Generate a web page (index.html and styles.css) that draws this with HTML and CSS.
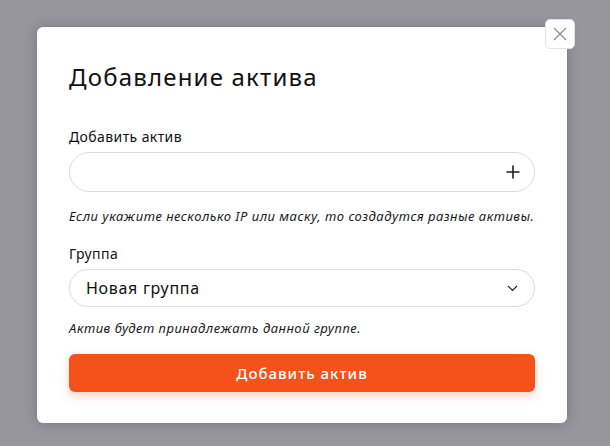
FILE: index.html
```html
<!DOCTYPE html>
<html lang="ru">
<head>
    <meta charset="UTF-8">
    <meta name="viewport" content="width=device-width, initial-scale=1.0">
    <title>Добавление актива</title>
    <link rel="stylesheet" href="styles.css">
</head>
<body>

<div class="modal">
    <button class="close-button" aria-label="Закрыть">
        <svg width="14" height="14" viewBox="0 0 14 14">
            <path d="M1 1L13 13M13 1L1 13" stroke="#8d8d8d" stroke-width="1.3" fill="none"/>
        </svg>
    </button>

    <h1 class="modal-title">Добавление актива</h1>

    <div class="field">
        <label class="field-label" for="assetInput">Добавить актив</label>
        <div class="input-wrap">
            <input type="text" id="assetInput" class="text-input">
            <span class="input-icon">
                <svg width="14" height="14" viewBox="0 0 14 14">
                    <path d="M7 0.5V13.5M0.5 7H13.5" stroke="#1c1c1c" stroke-width="1.6" fill="none"/>
                </svg>
            </span>
        </div>
        <p class="hint">Если укажите несколько IP или маску, то создадутся разные активы.</p>
    </div>

    <div class="field">
        <label class="field-label">Группа</label>
        <div class="select">
            <span class="select-value">Новая группа</span>
            <svg width="11" height="7" viewBox="0 0 11 7">
                <path d="M1 1L5.5 5.5L10 1" stroke="#222" stroke-width="1.2" fill="none"/>
            </svg>
        </div>
        <p class="hint">Актив будет принадлежать данной группе.</p>
    </div>

    <button class="submit-button">Добавить актив</button>
</div>

</body>
</html>
```

FILE: styles.css
```css
body {
    font-family: "Noto Sans", Arial, sans-serif;
    background-color: #97959d;
    margin: 0;
    padding: 27px 0 0 37px;
    height: 100vh;
    box-sizing: border-box;
    color: #111;
}
.modal {
    position: relative;
    width: 530px;
    height: 396px;
    box-sizing: border-box;
    background-color: #ffffff;
    border-radius: 6px;
    padding: 32px 32px 0 32px;
    box-shadow: 0 0 12px rgba(60, 58, 70, 0.35);
}
.close-button {
    position: absolute;
    top: -8px;
    right: -8px;
    width: 30px;
    height: 30px;
    background-color: #ffffff;
    border: 1px solid #e2e2e2;
    border-radius: 5px;
    display: flex;
    justify-content: center;
    align-items: center;
    padding: 0;
}
.modal-title {
    font-size: 24px;
    font-weight: 400;
    line-height: 36px;
    letter-spacing: 1.2px;
    margin: 0 0 33px 0;
}
.field {
    margin-bottom: 20px;
}
.field-label {
    display: block;
    font-size: 14px;
    font-weight: 400;
    line-height: 18px;
    letter-spacing: 0.4px;
    margin-bottom: 6px;
}
.input-wrap {
    position: relative;
}
.text-input {
    width: 100%;
    height: 40px;
    box-sizing: border-box;
    border: 1px solid #dcdcdc;
    border-radius: 20px;
    padding: 0 44px 0 16px;
    font-size: 16px;
    outline: none;
}
.input-icon {
    position: absolute;
    right: 15px;
    top: 13px;
    display: flex;
}
.select {
    height: 38px;
    box-sizing: border-box;
    border: 1px solid #dcdcdc;
    border-radius: 19px;
    padding: 0 16px;
    display: flex;
    align-items: center;
    justify-content: space-between;
}
.select-value {
    font-size: 16px;
    font-weight: 400;
    letter-spacing: 0.7px;
}
.hint {
    font-size: 13px;
    font-style: italic;
    line-height: 18px;
    letter-spacing: 0.5px;
    margin: 15px 0 0 0;
    color: #1a1a1a;
}
.select + .hint {
    margin-top: 12px;
}
.submit-button {
    display: block;
    width: 100%;
    height: 38px;
    margin-top: -3px;
    border: none;
    border-radius: 6px;
    background-color: #f5511a;
    color: #ffffff;
    font-family: inherit;
    font-size: 15px;
    font-weight: 500;
    letter-spacing: 1px;
    box-shadow: 0 4px 10px rgba(245, 81, 26, 0.25);
}
```
